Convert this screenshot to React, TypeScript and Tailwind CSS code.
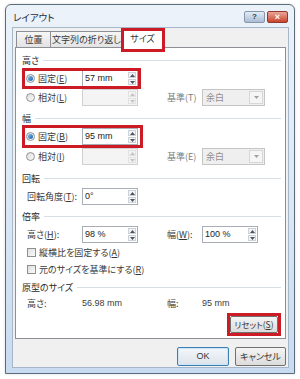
import React from "react";

function Radio({ checked }: { checked?: boolean }) {
  return (
    <span className="flex items-center justify-center w-[9px] h-[9px] rounded-full border border-[#8e9399] bg-gradient-to-br from-[#dcdcdc] to-[#fbfbfb]">
      {checked && <span className="w-[5px] h-[5px] rounded-full bg-gradient-to-br from-[#7cc0ef] to-[#1f5fa3]" />}
    </span>
  );
}

function Check() {
  return <span className="w-[9px] h-[9px] border border-[#8f8f8f] bg-gradient-to-br from-[#dedede] to-[#fbfbfb]" />;
}

function Spin({ disabled }: { disabled?: boolean }) {
  const fill = disabled ? "#c4c4c4" : "#4d5560";
  return (
    <div className="flex flex-col w-[10px] h-full p-px gap-px">
      <span className={`flex-1 flex items-center justify-center border ${disabled ? "border-[#e2e2e2]" : "border-[#cdd2d8] bg-[#f3f4f6]"}`}>
        <svg width="5" height="3" viewBox="0 0 5 3">
          <path d="M0 3L2.5 0L5 3Z" fill={fill} />
        </svg>
      </span>
      <span className={`flex-1 flex items-center justify-center border ${disabled ? "border-[#e2e2e2]" : "border-[#cdd2d8] bg-[#f3f4f6]"}`}>
        <svg width="5" height="3" viewBox="0 0 5 3">
          <path d="M0 0H5L2.5 3Z" fill={fill} />
        </svg>
      </span>
    </div>
  );
}

function NumBox({ value, disabled }: { value?: string; disabled?: boolean }) {
  return (
    <div
      className={`flex h-[17px] w-[56px] border ${
        disabled ? "border-[#d0d0d0] bg-[#f4f4f4]" : "border-[#a9aeb6] bg-white"
      }`}
    >
      <span className="flex-1 flex items-center pl-[2px] font-['Liberation_Sans',sans-serif] text-[9px] text-[#222]">
        {value}
      </span>
      <Spin disabled={disabled} />
    </div>
  );
}

function Select() {
  return (
    <div className="flex h-[17px] w-[63px] border border-[#c5c5c5] bg-[#efefef]">
      <span className="flex-1 flex items-center pl-[3px] text-[#8f8f8f]">余白</span>
      <span className="w-[14px] m-px flex items-center justify-center border border-[#d6d6d6] bg-[#f5f5f5]">
        <svg width="5" height="3" viewBox="0 0 5 3">
          <path d="M0 0H5L2.5 3Z" fill="#a0a0a0" />
        </svg>
      </span>
    </div>
  );
}

function Group({ label, className }: { label: string; className: string }) {
  return (
    <div className={`flex items-center h-[12px] pl-[6px] pr-[4px] gap-[4px] ${className}`}>
      <span className="text-[#2a2a2a]">{label}</span>
      <span className="flex-1 h-px bg-[#d7dfe6]" />
    </div>
  );
}

function RedBox({ className }: { className: string }) {
  return <span className={`absolute border-[3px] border-[#cc1b24] z-20 pointer-events-none ${className}`} />;
}

export default function App() {
  return (
    <div className="w-[300px] h-[379px] bg-white pt-[4px] pl-[5px] font-['Noto_Sans_CJK_JP','Noto_Sans',sans-serif] [font-feature-settings:'palt'] text-[9px] leading-none text-[#383838]">
      <div className="w-[290px] h-[370px] flex flex-col rounded-t-[6px] border border-[#5d6c7d] bg-gradient-to-b from-[#ecf2f9] via-[#dde8f5] to-[#c8dbf0] pl-[6px] pr-[5px] pb-[5px] shadow-[0_0_3px_rgba(0,0,0,0.15)]">
        {/* title bar */}
        <div className="flex justify-between h-[22px]">
          <span className="mt-[8px] ml-[1px] text-[9.5px] text-[#1b2a3a]">レイアウト</span>
          <div className="flex gap-[2px] mt-[6px] mr-[1px]">
            <span className="flex items-center justify-center w-[21px] h-[12px] rounded-[2px] border border-[#8797ab] bg-gradient-to-b from-[#e4ecf5] to-[#a9bdd4] text-[8px] font-bold text-[#2c3e57] font-['Liberation_Sans',sans-serif]">
              ?
            </span>
            <span className="flex items-center justify-center w-[21px] h-[12px] rounded-[2px] border border-[#8e3a2e] bg-gradient-to-b from-[#eaa597] to-[#c8412c] text-[9px] font-bold text-white font-['Liberation_Sans',sans-serif]">
              ×
            </span>
          </div>
        </div>

        {/* client area */}
        <div className="flex-1 flex flex-col bg-[#f0f0f0] border border-[#a7b7ca]">
          {/* tabs */}
          <div className="flex items-end pl-[3px]">
            <span className="flex items-center justify-center w-[35px] h-[16px] border border-b-0 border-[#8c8f96] bg-gradient-to-b from-[#f6f6f6] to-[#e3e3e3]">
              位置
            </span>
            <span className="flex items-center justify-center w-[73px] h-[16px] -ml-px border border-b-0 border-[#8c8f96] bg-gradient-to-b from-[#f6f6f6] to-[#e3e3e3]">
              文字列の折り返し
            </span>
            <span className="relative z-10 flex items-center justify-center w-[43px] h-[20px] -ml-[2px] -mb-px border border-b-0 border-[#8c8f96] bg-white">
              サイズ
              <RedBox className="-left-[1px] -right-[2px] -top-[1px] -bottom-[4px]" />
            </span>
          </div>

          {/* panel */}
          <div className="mx-[2px] h-[292px] flex flex-col border border-[#8c8f96] bg-white">
            <Group label="高さ" className="mt-[6px]" />
            <div className="flex items-center h-[17px] pl-[10px] mt-[4px]">
              <div className="relative flex items-center">
                <div className="flex items-center w-[56px]">
                  <Radio checked />
                  <span className="ml-[3px]">
                    固定(<u>E</u>)
                  </span>
                </div>
                <NumBox value="57 mm" />
                <RedBox className="-left-[4px] -right-[3px] -top-[2px] -bottom-[2px]" />
              </div>
            </div>
            <div className="flex items-center h-[17px] pl-[10px] mt-[2px]">
              <div className="flex items-center w-[56px]">
                <Radio />
                <span className="ml-[3px]">
                  相対(<u>L</u>)
                </span>
              </div>
              <NumBox disabled />
              <span className="ml-[29px] w-[35px] text-[#7d7d7d]">基準(T)</span>
              <Select />
            </div>

            <Group label="幅" className="mt-[6px]" />
            <div className="flex items-center h-[17px] pl-[10px] mt-[4px]">
              <div className="relative flex items-center">
                <div className="flex items-center w-[56px]">
                  <Radio checked />
                  <span className="ml-[3px]">
                    固定(<u>B</u>)
                  </span>
                </div>
                <NumBox value="95 mm" />
                <RedBox className="-left-[4px] -right-[5px] -top-[3px] -bottom-[3px]" />
              </div>
            </div>
            <div className="flex items-center h-[17px] pl-[10px] mt-[3px]">
              <div className="flex items-center w-[56px]">
                <Radio />
                <span className="ml-[3px]">
                  相対(<u>I</u>)
                </span>
              </div>
              <NumBox disabled />
              <span className="ml-[29px] w-[35px] text-[#7d7d7d]">基準(E)</span>
              <Select />
            </div>

            <Group label="回転" className="mt-[7px]" />
            <div className="flex items-center h-[17px] pl-[11px] mt-[4px]">
              <span className="w-[55px]">
                回転角度(<u>T</u>):
              </span>
              <NumBox value="0°" />
            </div>

            <Group label="倍率" className="mt-[5px]" />
            <div className="flex items-center h-[17px] pl-[11px] mt-[4px]">
              <span className="w-[55px]">
                高さ(<u>H</u>):
              </span>
              <NumBox value="98 %" />
              <span className="ml-[29px] w-[35px]">
                幅(<u>W</u>):
              </span>
              <NumBox value="100 %" />
            </div>
            <div className="flex items-center h-[14px] pl-[11px] mt-[2px] gap-[3px]">
              <Check />
              <span>
                縦横比を固定する(<u>A</u>)
              </span>
            </div>
            <div className="flex items-center h-[14px] pl-[11px] mt-[3px] gap-[3px]">
              <Check />
              <span>
                元のサイズを基準にする(<u>R</u>)
              </span>
            </div>

            <Group label="原型のサイズ" className="mt-[5px]" />
            <div className="flex items-center h-[12px] pl-[11px] mt-[4px] text-[#3c3c3c]">
              <span className="w-[55px]">高さ:</span>
              <span className="w-[85px] font-['Liberation_Sans',sans-serif]">56.98 mm</span>
              <span className="w-[35px]">幅:</span>
              <span className="font-['Liberation_Sans',sans-serif]">95 mm</span>
            </div>
            <div className="flex justify-end pr-[7px] mt-[7px]">
              <span className="relative flex items-center justify-center w-[48px] h-[17px] rounded-[2px] border border-[#707070] bg-gradient-to-b from-[#f4f4f4] to-[#dcdcdc] text-[8.5px]">
                リセット(<u>S</u>)
                <RedBox className="-left-[4px] -right-[4px] -top-[4px] -bottom-[4px]" />
              </span>
            </div>
          </div>

          {/* buttons */}
          <div className="flex justify-end gap-[6px] pr-[2px] mt-[8px]">
            <span className="flex items-center justify-center w-[52px] h-[19px] rounded-[2px] border border-[#3c7fb1] bg-gradient-to-b from-[#f3f7fb] to-[#dde3ea] shadow-[inset_0_0_0_1px_#cbe4f7] font-['Liberation_Sans',sans-serif] text-[9px]">
              OK
            </span>
            <span className="flex items-center justify-center w-[51px] h-[19px] rounded-[2px] border border-[#707070] bg-gradient-to-b from-[#f4f4f4] to-[#dcdcdc]">
              キャンセル
            </span>
          </div>
        </div>
      </div>
    </div>
  );
}
